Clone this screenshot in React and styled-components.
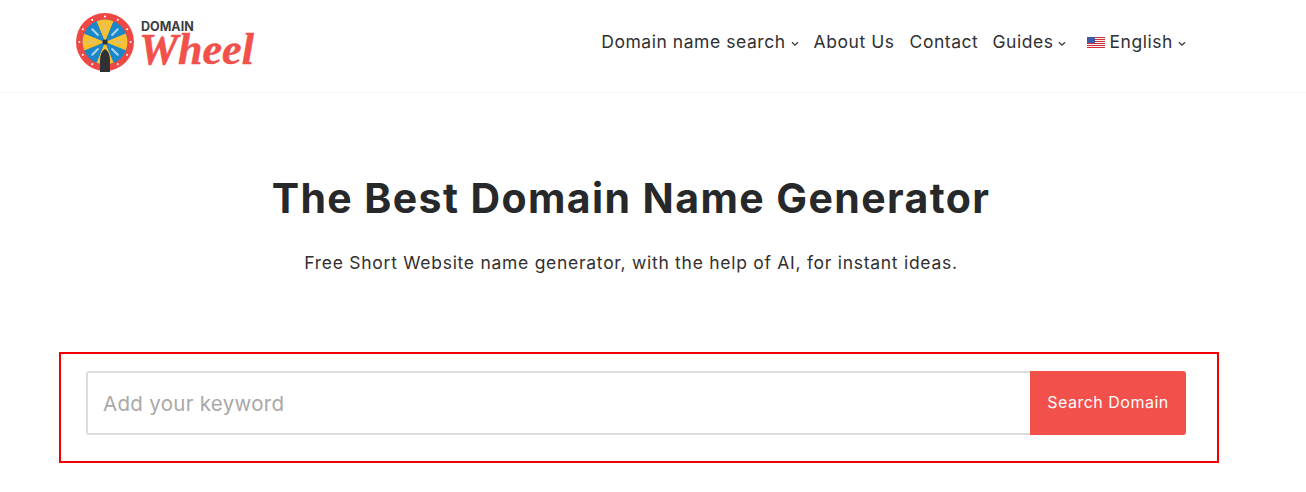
import styled, { createGlobalStyle } from 'styled-components'

const GlobalStyle = createGlobalStyle`
    * { box-sizing: border-box; }
    body {
        margin: 0;
        background: #fff;
        color: #272829;
        font-family: "Inter", "Open Sans", sans-serif;
    }
`

const Page = styled.div`
    width: 100%;
    height: 492px;
    overflow: hidden;
`

const Header = styled.header`
    height: 93px;
    padding: 0 120px 0 75px;
    display: flex;
    align-items: center;
    justify-content: space-between;
    border-bottom: 1px solid #f5f5f5;
`

const Logo = styled.a`
    display: flex;
    align-items: flex-start;
    height: 62px;
    width: 180px;
    margin: -6px 0 0 -1px;
`

const LogoWords = styled.div`
    display: flex;
    flex-direction: column;
    margin: 9px 0 0 5px;
`

const LogoSmall = styled.span`
    font-size: 12.5px;
    font-weight: 700;
    line-height: 12px;
    color: #3a3d42;
`

const LogoScript = styled.span`
    margin-left: -2px;
    font-family: "Liberation Serif", serif;
    font-style: italic;
    font-weight: 700;
    font-size: 44px;
    line-height: 34px;
    color: #f2504b;
    -webkit-text-stroke: 0.5px #f2504b;
`

const Nav = styled.nav`
    display: flex;
    align-items: center;
    margin-top: -8px;
`

const NavItem = styled.a`
    display: flex;
    align-items: center;
    font-size: 17.5px;
    line-height: 24px;
    letter-spacing: 0.55px;
    color: #2f3033;
    margin-left: ${props => props.gap}px;
`

const Caret = styled.svg`
    width: 8px;
    height: 6px;
    margin-left: 5px;
    margin-top: 3px;
    fill: none;
    stroke: #3a3b3e;
    stroke-width: 1.3;
`

const Flag = styled.svg`
    width: 18px;
    height: 11px;
    margin-right: 4px;
    margin-top: 1px;
`

const Hero = styled.section`
    width: 1262px;
    padding-top: 80px;
    text-align: center;
`

const Title = styled.h1`
    margin: 0;
    font-size: 41px;
    line-height: 50px;
    font-weight: 700;
    letter-spacing: 1.4px;
    color: #272829;
`

const Lead = styled.p`
    margin: 27px 0 0;
    font-size: 17.5px;
    line-height: 26px;
    letter-spacing: 0.72px;
    color: #33302f;
`

const Frame = styled.div`
    width: 1160px;
    height: 111px;
    margin: 76px 0 0 59px;
    padding: 17px 31px 0 25px;
    border: 2px solid #f00000;
`

const SearchForm = styled.form`
    display: flex;
    height: 64px;
`

const Keyword = styled.input`
    flex: 1;
    min-width: 0;
    height: 100%;
    padding: 0 15px;
    border: 2px solid #dcdcdc;
    border-right: 0;
    border-radius: 3px 0 0 3px;
    outline: none;
    font-family: inherit;
    font-size: 20.5px;
    letter-spacing: 0.3px;
    color: #272829;

    &::placeholder {
        color: #a8a8a8;
        opacity: 1;
    }
`

const SearchButton = styled.button`
    width: 156px;
    height: 100%;
    padding: 0 0 2px;
    border: 0;
    border-radius: 0 3px 3px 0;
    background: #f2504b;
    color: #fff;
    font-family: inherit;
    font-size: 16px;
    letter-spacing: 0.5px;
`

// wheel segments, alternating yellow and blue
const segments = Array.from({ length: 8 }, (_, i) => i)

function Wheel() {
    return (
        <svg width="62" height="62" viewBox="0 0 62 62">
            <circle cx="31" cy="30" r="29" fill="#ee4744" />
            <circle cx="31" cy="30" r="22.5" fill="#1b87c9" />
            {segments.map(i => (
                <path
                    key={i}
                    d="M31 30 L22.4 9.3 A22.5 22.5 0 0 1 39.6 9.3 Z"
                    fill={i % 2 === 0 ? '#fbc02d' : '#1b87c9'}
                    transform={`rotate(${i * 45} 31 30)`}
                />
            ))}
            {segments.map(i => (
                <rect
                    key={i}
                    x="30"
                    y="11"
                    width="2"
                    height="10"
                    rx="1"
                    fill={i % 2 === 0 ? '#d9c27a' : '#a9d4ee'}
                    transform={`rotate(${i * 45} 31 30)`}
                />
            ))}
            {Array.from({ length: 12 }, (_, i) => (
                <circle key={i} cx="31" cy="4.4" r="1" fill="#fff" transform={`rotate(${i * 30} 31 30)`} />
            ))}
            <circle cx="31" cy="30" r="2.6" fill="#2e3136" />
            <path d="M26 48 Q26 40 31 37 Q36 40 36 48 L36 60 L26 60 Z" fill="#2e3136" />
        </svg>
    )
}

function Chevron() {
    return (
        <Caret viewBox="0 0 8 6">
            <path d="M1 1.2 L4 4.2 L7 1.2" />
        </Caret>
    )
}

function UsFlag() {
    return (
        <Flag viewBox="0 0 18 11">
            <rect width="18" height="11" fill="#f4f4f4" />
            {[0, 2, 4, 6, 8, 10].map(y => (
                <rect key={y} y={y} width="18" height="1" fill="#d22f3c" />
            ))}
            <rect width="8" height="6" fill="#3f5aa6" />
        </Flag>
    )
}

export default function App() {
    return (
        <Page>
            <GlobalStyle />
            <Header>
                <Logo>
                    <Wheel />
                    <LogoWords>
                        <LogoSmall>DOMAIN</LogoSmall>
                        <LogoScript>Wheel</LogoScript>
                    </LogoWords>
                </Logo>
                <Nav>
                    <NavItem>Domain name search<Chevron /></NavItem>
                    <NavItem gap={15}>About Us</NavItem>
                    <NavItem gap={15}>Contact</NavItem>
                    <NavItem gap={14}>Guides<Chevron /></NavItem>
                    <NavItem gap={21}><UsFlag />English<Chevron /></NavItem>
                </Nav>
            </Header>
            <Hero>
                <Title>The Best Domain Name Generator</Title>
                <Lead>Free Short Website name generator, with the help of AI, for instant ideas.</Lead>
            </Hero>
            <Frame>
                <SearchForm onSubmit={e => e.preventDefault()}>
                    <Keyword placeholder="Add your keyword" />
                    <SearchButton type="submit">Search Domain</SearchButton>
                </SearchForm>
            </Frame>
        </Page>
    )
}
